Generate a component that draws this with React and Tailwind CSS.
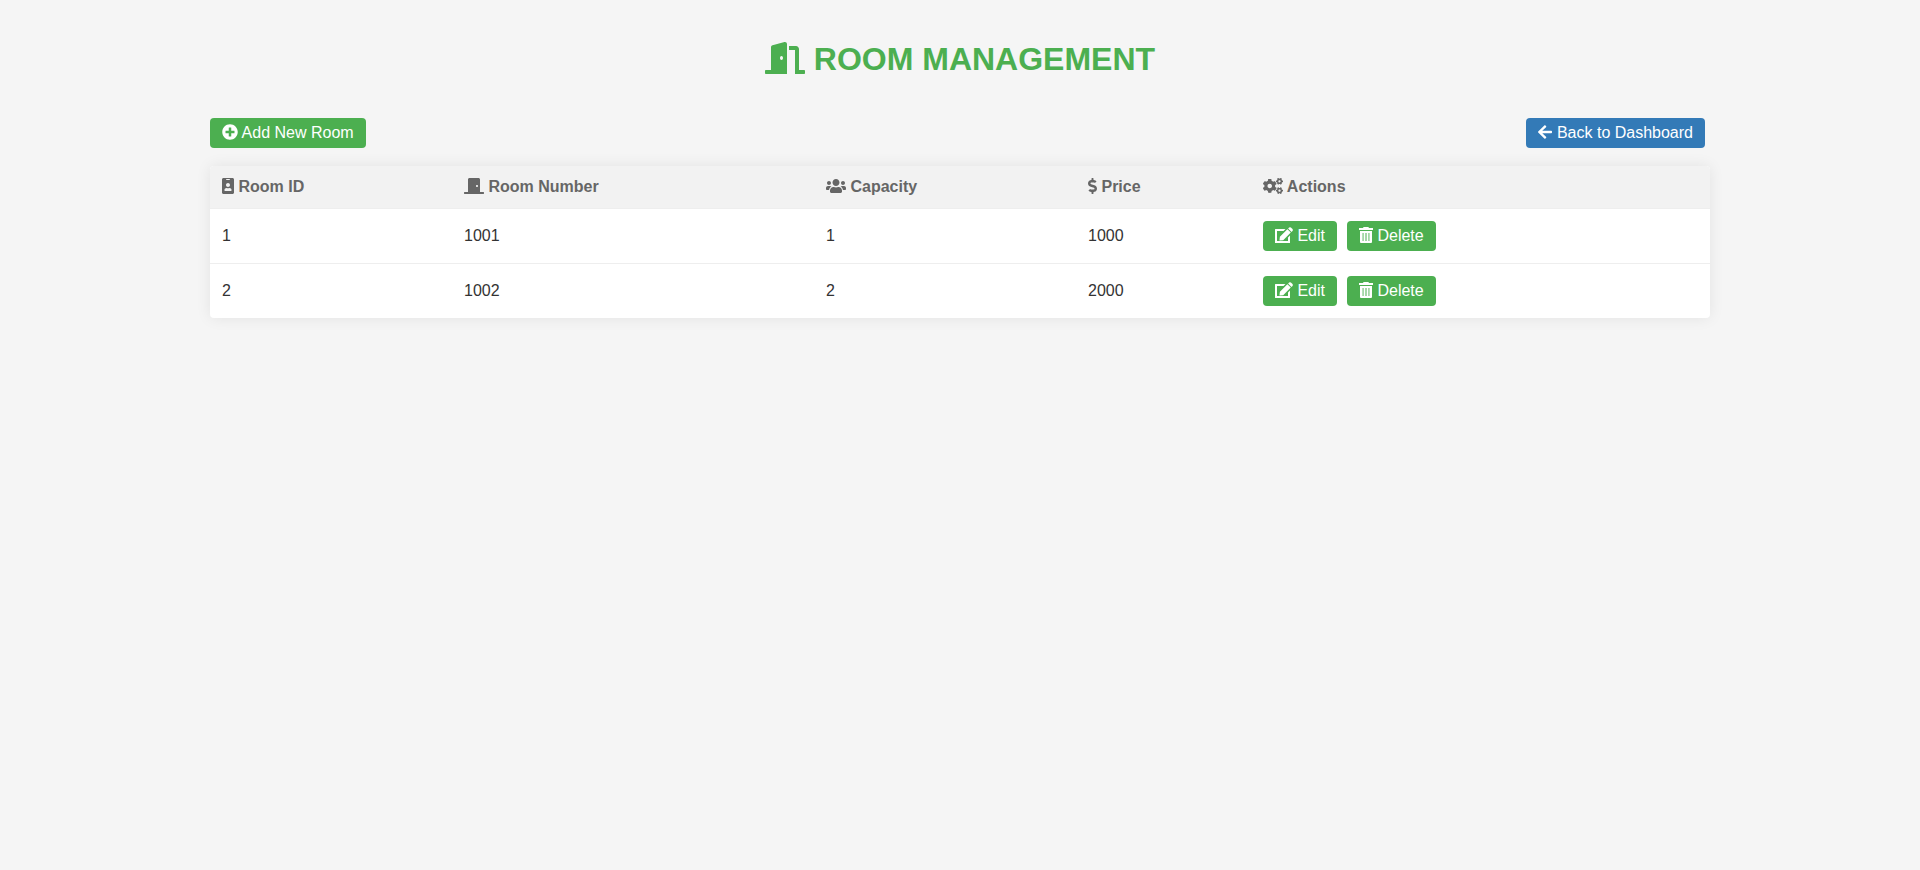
import {
  FaArrowLeft,
  FaCogs,
  FaDollarSign,
  FaDoorClosed,
  FaDoorOpen,
  FaIdBadge,
  FaPlusCircle,
  FaUsers,
} from "react-icons/fa";

function EditIcon(props) {
  return (
    <svg viewBox="0 0 18 16" fill="currentColor" {...props}>
      <path d="M0 2.5Q0 2 .5 2H10.5L8.5 4H2V14H13V10.5L15 8.5V15.5Q15 16 14.5 16H.5Q0 16 0 15.5Z" />
      <path d="M12.4 2.2 15.8 5.6 8.2 13.2 5 13.6Q4.4 13.6 4.5 13L4.9 9.8Z" />
      <path d="M13.1 1.5 14.1.5Q15 -.2 15.9.5L17.5 2.1Q18.2 3 17.5 3.9L16.5 4.9Z" />
    </svg>
  );
}

function TrashIcon(props) {
  return (
    <svg viewBox="0 0 14 16" fill="currentColor" {...props}>
      <path d="M4.6 0H9.4L10 1H14V3H0V1H4Z" />
      <path
        fillRule="evenodd"
        d="M1 4H13V15Q13 16 12 16H2Q1 16 1 15ZM3.6 6V14H4.5V6ZM6.5 6V14H7.5V6ZM9.5 6V14H10.4V6Z"
      />
    </svg>
  );
}

const columns = [
  { label: "Room ID", Icon: FaIdBadge, icon: "w-3", width: "w-[242px]" },
  { label: "Room Number", Icon: FaDoorClosed, icon: "w-5", width: "w-[362px]" },
  { label: "Capacity", Icon: FaUsers, icon: "w-5", width: "w-[262px]" },
  { label: "Price", Icon: FaDollarSign, icon: "w-[9px]", width: "w-[175px]" },
  { label: "Actions", Icon: FaCogs, icon: "w-5", width: "w-[459px]" },
];

const rooms = [
  { id: 1, number: 1001, capacity: 1, price: 1000 },
  { id: 2, number: 1002, capacity: 2, price: 2000 },
];

const buttonBase =
  "inline-block cursor-pointer rounded-sm px-3 py-1.5 leading-[18px] whitespace-nowrap text-white";

function Icon({ as: Glyph, width }) {
  return <Glyph aria-hidden="true" className={`inline-block h-4 align-[-2px] ${width}`} />;
}

export default function App() {
  return (
    <div className="min-h-screen bg-[#f5f5f5] px-5 py-10 font-['Liberation_Sans',Arial,sans-serif] text-base text-[#333]">
      <main className="mx-auto max-w-[1500px]">
        <h1 className="mb-10 text-center text-[32px] leading-[38px] font-bold text-[#4caf50] uppercase">
          <FaDoorOpen aria-hidden="true" className="inline-block h-8 w-10 align-[-4px]" /> Room Management
        </h1>

        <div className="mb-[18px] flex items-center justify-between pr-[5px]">
          <a href="#add" className={`${buttonBase} bg-[#4caf50]`}>
            <Icon as={FaPlusCircle} width="w-4" /> Add New Room
          </a>
          <a href="#dashboard" className={`${buttonBase} bg-[#337ab7]`}>
            <Icon as={FaArrowLeft} width="w-3.5" /> Back to Dashboard
          </a>
        </div>

        <table className="w-full table-fixed border-separate border-spacing-0 overflow-hidden rounded-sm bg-white text-left shadow-[0_0_15px_rgba(0,0,0,0.08)]">
          <thead className="bg-[#f2f2f2] text-[#666]">
            <tr>
              {columns.map((col) => (
                <th
                  key={col.label}
                  scope="col"
                  className={`border-b border-[#eee] p-3 leading-[18px] font-bold ${col.width}`}
                >
                  <Icon as={col.Icon} width={col.icon} /> {col.label}
                </th>
              ))}
            </tr>
          </thead>
          <tbody className="[&>tr:not(:last-child)>td]:border-b [&>tr>td]:border-[#eee] [&>tr>td]:p-3 [&>tr>td]:leading-[18px]">
            {rooms.map((room) => (
              <tr key={room.id}>
                <td>{room.id}</td>
                <td>{room.number}</td>
                <td>{room.capacity}</td>
                <td>{room.price}</td>
                <td>
                  <div className="flex gap-2.5">
                    <button type="button" className={`${buttonBase} bg-[#4caf50]`}>
                      <Icon as={EditIcon} width="w-[18px]" /> Edit
                    </button>
                    <button type="button" className={`${buttonBase} bg-[#4caf50]`}>
                      <Icon as={TrashIcon} width="w-3.5" /> Delete
                    </button>
                  </div>
                </td>
              </tr>
            ))}
          </tbody>
        </table>
      </main>
    </div>
  );
}
